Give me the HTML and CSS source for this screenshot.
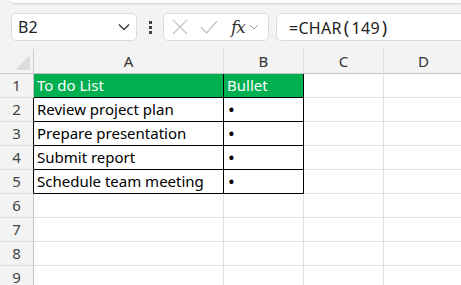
FILE: index.html
```html
<!DOCTYPE html>
<html lang="en">
<head>
  <meta charset="UTF-8" />
  <title>Bullet list</title>
  <link rel="stylesheet" href="styles.css">
</head>
<body>
  <div class="ribbon-edge"></div>

  <div class="formula-bar">
    <div class="name-box">
      <span class="name-text">B2</span>
      <svg class="chev" width="12" height="8" viewBox="0 0 12 8"><path d="M1 1.5 L6 6.5 L11 1.5" fill="none" stroke="#333" stroke-width="1.3"/></svg>
    </div>
    <div class="grip"><i></i><i></i><i></i></div>
    <div class="fx-box">
      <svg width="16" height="16" viewBox="0 0 16 16"><path d="M1 1 L15 15 M15 1 L1 15" stroke="#c4c4c4" stroke-width="1.3"/></svg>
      <svg width="18" height="14" viewBox="0 0 18 14"><path d="M1 7 L6.5 13 L17 1" fill="none" stroke="#c4c4c4" stroke-width="1.3"/></svg>
      <span class="fx">fx</span>
      <svg width="10" height="6" viewBox="0 0 10 6"><path d="M1 1 L5 5 L9 1" fill="none" stroke="#999" stroke-width="1"/></svg>
    </div>
    <div class="formula-input">=CHAR<span class="paren">(</span>149<span class="paren">)</span></div>
  </div>

  <div class="sheet">
    <div class="corner"><span class="tri"></span></div>
    <div class="col-head">A</div>
    <div class="col-head">B</div>
    <div class="col-head">C</div>
    <div class="col-head">D</div>

    <div class="row-head">1</div>
    <div class="cell head-cell a">To do List</div>
    <div class="cell head-cell b">Bullet</div>
    <div class="cell"></div>
    <div class="cell"></div>

    <div class="row-head dark">2</div>
    <div class="cell list a">Review project plan</div>
    <div class="cell list b">•</div>
    <div class="cell"></div>
    <div class="cell"></div>

    <div class="row-head dark">3</div>
    <div class="cell list a">Prepare presentation</div>
    <div class="cell list b">•</div>
    <div class="cell"></div>
    <div class="cell"></div>

    <div class="row-head dark">4</div>
    <div class="cell list a">Submit report</div>
    <div class="cell list b">•</div>
    <div class="cell"></div>
    <div class="cell"></div>

    <div class="row-head dark">5</div>
    <div class="cell list a">Schedule team meeting</div>
    <div class="cell list b">•</div>
    <div class="cell"></div>
    <div class="cell"></div>

    <div class="row-head">6</div>
    <div class="cell a"></div>
    <div class="cell"></div>
    <div class="cell"></div>
    <div class="cell"></div>

    <div class="row-head">7</div>
    <div class="cell"></div>
    <div class="cell"></div>
    <div class="cell"></div>
    <div class="cell"></div>

    <div class="row-head">8</div>
    <div class="cell"></div>
    <div class="cell"></div>
    <div class="cell"></div>
    <div class="cell"></div>

    <div class="row-head">9</div>
    <div class="cell"></div>
    <div class="cell"></div>
    <div class="cell"></div>
    <div class="cell"></div>
  </div>
</body>
</html>
```

FILE: styles.css
```css
* {
  box-sizing: border-box;
  margin: 0;
  padding: 0;
}
body {
  background: #f3f3f3;
  font-family: 'Noto Sans', sans-serif;
  width: 461px;
  height: 285px;
  overflow: hidden;
}
.ribbon-edge {
  height: 3px;
  margin-left: 12px;
  background: #fff;
  border-radius: 0 0 0 6px;
  box-shadow: 0 1px 2px rgba(0, 0, 0, 0.15);
}
.formula-bar {
  display: flex;
  align-items: center;
  height: 28px;
  margin-top: 10px;
  padding-left: 11px;
}
.name-box {
  display: flex;
  align-items: center;
  justify-content: space-between;
  width: 126px;
  height: 28px;
  background: #fff;
  border: 1px solid #dcdcdc;
  border-radius: 5px;
  padding: 0 6px 0 6px;
}
.name-text {
  font-size: 16px;
  color: #222;
}
.grip {
  display: flex;
  flex-direction: column;
  gap: 2px;
  width: 26px;
  align-items: center;
}
.grip i {
  display: block;
  width: 3px;
  height: 3px;
  background: #444;
}
.fx-box {
  display: flex;
  align-items: center;
  width: 106px;
  height: 28px;
  background: #fff;
  border: 1px solid #dcdcdc;
  border-radius: 5px;
  padding-left: 8px;
}
.fx-box svg:nth-child(2) {
  margin-left: 12px;
}
.fx {
  font-family: 'DejaVu Serif', serif;
  font-style: italic;
  font-size: 17px;
  color: #333;
  margin-left: 13px;
  margin-right: 4px;
  letter-spacing: -1px;
}
.formula-input {
  flex: 1;
  height: 28px;
  margin-left: 7px;
  background: #fff;
  border: 1px solid #dcdcdc;
  border-right: none;
  border-radius: 5px 0 0 5px;
  padding-left: 12px;
  font-size: 16px;
  line-height: 26px;
  color: #222;
  letter-spacing: 0.3px;
}
.paren {
  font-size: 18px;
  padding: 0 2px;
}
.sheet {
  display: grid;
  grid-template-columns: 34px 190px 80px 80px 80px;
  grid-template-rows: 25px repeat(9, 24px);
  margin-top: 8px;
  background: #fff;
}
.corner {
  background: #f3f3f3;
  border-right: 1px solid #ccc;
  border-bottom: 1px solid #ccc;
  position: relative;
}
.tri {
  position: absolute;
  right: 3px;
  bottom: 3px;
  width: 0;
  height: 0;
  border-left: 15px solid transparent;
  border-bottom: 15px solid #dcdcdc;
}
.col-head {
  background: #f3f3f3;
  border-right: 1px solid #dcdcdc;
  border-bottom: 1px solid #c4c4c4;
  text-align: center;
  font-size: 15px;
  line-height: 24px;
  color: #333;
}
.row-head {
  background: #f3f3f3;
  border-right: 1px solid #c4c4c4;
  border-bottom: 1px solid #dcdcdc;
  text-align: center;
  font-size: 15px;
  line-height: 23px;
  color: #444;
  overflow: hidden;
}
.row-head.dark {
  border-right-color: #000;
}
.cell {
  border-right: 1px solid #e1e1e1;
  border-bottom: 1px solid #e1e1e1;
  font-size: 15px;
  line-height: 23px;
  padding-left: 3px;
  color: #000;
  white-space: nowrap;
  overflow: hidden;
}
.head-cell {
  background: #00b050;
  color: #fff;
  border-bottom-color: #000;
  border-right-color: #000;
}
.list {
  border-right-color: #000;
  border-bottom-color: #000;
}
.list.b {
  padding-left: 4px;
  font-size: 18px;
  line-height: 23px;
}
```
